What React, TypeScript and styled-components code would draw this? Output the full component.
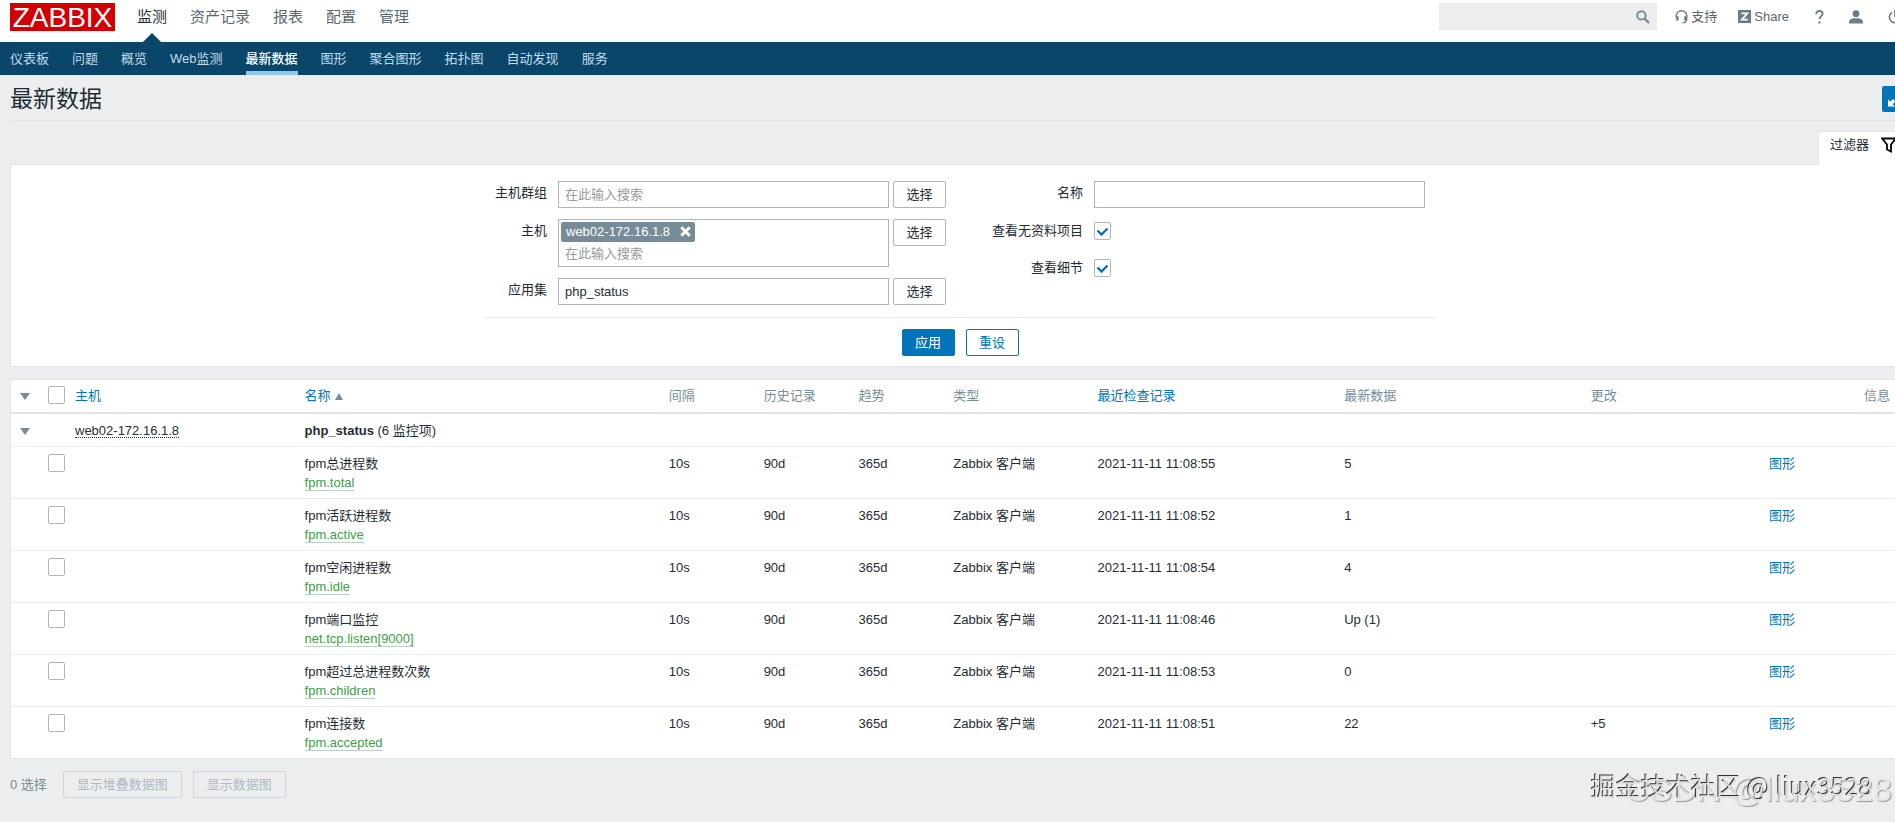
import React from 'react';
import styled, { createGlobalStyle, css } from 'styled-components';

const GlobalStyle = createGlobalStyle`
  * { box-sizing: border-box; }
  html { background: #ebedef; }
  body {
    margin: 0;
    overflow-x: hidden;
    color: #1f2c33;
    font: 13px/19px "Liberation Sans", "Noto Sans CJK SC", sans-serif;
  }
  button, input { font: inherit; color: inherit; }
  a { text-decoration: none; }
`;

const Page = styled.div`
  width: calc(100% + 25px);
`;

const TopBar = styled.header`
  display: flex;
  align-items: flex-start;
  height: 42px;
  padding: 3px 18px 0 10px;
  background: #fff;
`;

const Logo = styled.a`
  width: 105px;
  height: 28px;
  background: #d40000;
  color: #fff;
  font-size: 28px;
  line-height: 29px;
  text-align: center;
`;

const MainNav = styled.nav`
  display: flex;
  gap: 23px;
  margin-left: 22px;
`;

const MainLink = styled.a<{ $active?: boolean }>`
  position: relative;
  height: 39px;
  font-size: 15px;
  line-height: 28px;
  color: ${p => (p.$active ? '#1f2c33' : '#5b666c')};
  ${p => p.$active && css`
    &::after {
      content: '';
      position: absolute;
      bottom: 0;
      left: 50%;
      margin-left: -9px;
      border: 9px solid transparent;
      border-top: 0;
      border-bottom-color: #0a466a;
    }
  `}
`;

const Tools = styled.div`
  display: flex;
  align-items: center;
  margin-left: auto;
  height: 27px;
  color: #5b666c;
`;

const SearchBox = styled.form`
  display: flex;
  align-items: center;
  width: 218px;
  height: 27px;
  margin-right: 18px;
  padding-right: 7px;
  background: #ededed;
`;

const SearchInput = styled.input`
  flex: 1;
  min-width: 0;
  height: 100%;
  padding: 0 6px;
  border: 0;
  background: transparent;
  outline: 0;
`;

const PlainButton = styled.button`
  display: flex;
  padding: 0;
  border: 0;
  background: none;
  color: #768d99;
  cursor: pointer;
`;

const ToolLink = styled.a`
  display: flex;
  align-items: center;
  gap: 3px;
  color: #5b666c;
  margin-right: 21px;
  svg { color: #6b7d86; }
`;

const IconLinks = styled.div`
  display: flex;
  gap: 25px;
  margin-left: 5px;
  a { display: flex; color: #6b7d86; }
`;

const SubNav = styled.nav`
  display: flex;
  gap: 23px;
  height: 33px;
  padding: 0 10px;
  background: #0a466a;
`;

const SubLink = styled.a<{ $active?: boolean }>`
  height: 33px;
  line-height: 33px;
  color: ${p => (p.$active ? '#fff' : '#c3dcea')};
  font-weight: ${p => (p.$active ? 500 : 400)};
  border-bottom: ${p => (p.$active ? '4px solid #8fc8ee' : '0')};
`;

const Content = styled.main`
  padding: 0 10px;
`;

const TitleBar = styled.div`
  display: flex;
  align-items: center;
  justify-content: space-between;
  height: 46px;
  padding-top: 3px;
  border-bottom: 1px solid #dfe4e7;
`;

const Title = styled.h1`
  margin: 0;
  font-size: 23px;
  line-height: 34px;
  font-weight: 400;
`;

const FullScreen = styled.button`
  display: flex;
  width: 28px;
  height: 26px;
  padding: 0;
  align-items: center;
  justify-content: center;
  border: 0;
  border-radius: 2px;
  background: #0275b8;
  color: #fff;
`;

const TabRow = styled.div`
  display: flex;
  justify-content: flex-end;
  padding-top: 10px;
`;

const FilterTab = styled.button`
  display: flex;
  align-items: center;
  gap: 12px;
  height: 34px;
  padding: 0 12px 8px 11px;
  margin-bottom: -1px;
  border: 1px solid #dfe4e7;
  border-bottom: 0;
  background: #fff;
`;

const Panel = styled.section`
  border: 1px solid #dfe4e7;
  background: #fff;
`;

const FilterForm = styled.form`
  width: 952px;
  max-width: 100%;
  margin: 0 auto;
  padding: 16px 0 10px;
`;

const FilterGrid = styled.div`
  display: grid;
  grid-template-columns: 1fr 1fr;
  padding-bottom: 12px;
  border-bottom: 1px solid #ebeef0;
`;

const FieldColumn = styled.div<{ $label: number }>`
  display: grid;
  grid-template-columns: ${p => p.$label}px 1fr;
  grid-auto-rows: max-content;
  gap: 11px;
`;

const Label = styled.label`
  padding-top: 2px;
  text-align: right;
  white-space: nowrap;
`;

const FieldRow = styled.div`
  display: flex;
  align-items: flex-start;
  gap: 4px;
  min-height: 26px;
`;

const inputBox = css`
  width: 331px;
  border: 1px solid #acb6bb;
  background: #fff;
`;

const TextInput = styled.input`
  ${inputBox}
  height: 27px;
  padding: 0 6px;
  outline: 0;
  &::placeholder { color: #999; opacity: 1; }
`;

const MultiSelect = styled.div`
  ${inputBox}
  height: 48px;
  padding: 2px;
`;

const MultiInput = styled.input`
  display: block;
  width: 100%;
  height: 23px;
  padding: 0 4px;
  border: 0;
  outline: 0;
  background: transparent;
  &::placeholder { color: #999; opacity: 1; }
`;

const Tag = styled.span`
  display: inline-flex;
  align-items: center;
  gap: 10px;
  height: 20px;
  padding: 0 4px 1px 5px;
  border-radius: 2px;
  background: #768d99;
  color: #fff;
  vertical-align: top;
  button { color: #fff; }
`;

const Button = styled.button<{ $kind?: 'primary' | 'outline' | 'plain' }>`
  height: 27px;
  min-width: 53px;
  padding: 0 12px;
  line-height: 25px;
  border-radius: 2px;
  border: 1px solid ${p => (p.$kind === 'plain' ? '#acb6bb' : '#0275b8')};
  background: ${p => (p.$kind === 'primary' ? '#0275b8' : '#fff')};
  color: ${p => (p.$kind === 'primary' ? '#fff' : p.$kind === 'plain' ? '#1f2c33' : '#0275b8')};
  cursor: pointer;
  white-space: nowrap;
  &:disabled {
    padding: 0 13px;
    border-color: #ccd5d9;
    background: transparent;
    color: #acbbc2;
    cursor: default;
  }
`;

const FormActions = styled.div`
  display: flex;
  justify-content: center;
  gap: 11px;
  padding-top: 11px;
`;

const tick = `url("data:image/svg+xml,%3Csvg xmlns='http://www.w3.org/2000/svg' width='15' height='16' viewBox='0 0 15 16'%3E%3Cpath d='M2.5 7.5l4 4 6-6' fill='none' stroke='%230275b8' stroke-width='2.4'/%3E%3C/svg%3E")`;

const CheckBox = styled.input.attrs({ type: 'checkbox' })`
  appearance: none;
  display: block;
  flex: none;
  width: 17px;
  height: 18px;
  margin: 0;
  border: 1px solid #acb6bb;
  border-radius: 2px;
  background: #fff;
  &:checked { background: #fff ${tick} center no-repeat; }
`;

const CheckRow = styled(FieldRow)`
  padding-top: 3px;
`;

const DataTable = styled.table`
  width: 100%;
  table-layout: fixed;
  border-collapse: collapse;
  text-align: left;
  th, td { vertical-align: top; white-space: nowrap; }
  th {
    padding: 6px 5px 7px;
    border-bottom: 2px solid #dfe4e7;
    font-weight: 400;
    color: #768d99;
  }
  td { padding: 7px 5px 6px; border-bottom: 1px solid #ebeef0; }
  th:first-child, td:first-child { padding-left: 9px; }
  th:last-child { padding-right: 20px; text-align: right; }
`;

const ItemRow = styled.tr`
  td { padding-bottom: 7px; }
  &:last-child td { border-bottom: 0; }
`;

const Toggle = styled.button`
  display: block;
  width: 10px;
  height: 16px;
  padding: 4px 0 0;
  border: 0;
  background: none;
  &::before {
    content: '';
    display: block;
    border: 5px solid transparent;
    border-top: 7px solid #768d99;
    border-bottom: 0;
  }
`;

const SortUp = styled.span`
  display: inline-block;
  margin-left: 4px;
  border: 4px solid transparent;
  border-top: 0;
  border-bottom: 7px solid #768d99;
`;

const Link = styled.a`
  color: #0275b8;
`;

const HostLink = styled.a`
  display: inline-block;
  height: 17px;
  color: #1f2c33;
  border-bottom: 1px dotted #1f2c33;
`;

const ItemKey = styled.a`
  display: block;
  width: max-content;
  height: 18px;
  color: #429e47;
  border-bottom: 1px solid #bccfc9;
`;

const Footer = styled.footer`
  display: flex;
  align-items: center;
  gap: 11px;
  padding: 12px 0 22px;
  color: #768d99;
`;

const Selected = styled.span`
  margin-right: 5px;
`;

const Watermark = styled.div<{ $faint?: boolean }>`
  position: fixed;
  pointer-events: none;
  white-space: nowrap;
  line-height: 32px;
  ${p => p.$faint ? css`
    right: 3px;
    bottom: 17px;
    font-size: 34px;
    color: rgba(235, 237, 238, 0.9);
    text-shadow: 1px 1px 1px rgba(120, 120, 120, 0.7);
  ` : css`
    right: 22px;
    bottom: 21px;
    font-family: "Noto Sans CJK SC", sans-serif;
    font-size: 25px;
    color: #dcdedf;
    text-shadow: -1px -1px 0 #333;
  `}
`;

const SearchIcon = () => (
  <svg width="14" height="14" viewBox="0 0 14 14" fill="none" stroke="currentColor">
    <circle cx="5.4" cy="5.4" r="4.2" strokeWidth="2" />
    <path d="M8.6 8.6l4.4 4.4" strokeWidth="2.4" />
  </svg>
);

const HeadsetIcon = () => (
  <svg width="13" height="14" viewBox="0 0 13 14" fill="none" stroke="currentColor">
    <path d="M1.2 8V5.8a5.2 5 0 0 1 10.6 0V8.5c0 2.6-1.3 4.2-4.3 4.4" strokeWidth="1.4" />
    <path d="M2.4 6.2v4.2M10.4 6.2v4.2" strokeWidth="2.4" />
  </svg>
);

const ShareIcon = () => (
  <svg width="13" height="13" viewBox="0 0 13 13">
    <rect width="13" height="13" fill="currentColor" />
    <path d="M3.4 3.4h6L3.8 9.7h6" fill="none" stroke="#fff" strokeWidth="1.7" />
  </svg>
);

const HelpIcon = () => (
  <svg width="9" height="14" viewBox="0 0 9 14" fill="none" stroke="currentColor" strokeWidth="1.9">
    <path d="M1.2 4.2C1.2 2.2 2.5 1 4.4 1s3.2 1.1 3.2 2.8c0 2.3-3.1 2.5-3.1 5.4" />
    <path d="M4.5 11.4v2.2" />
  </svg>
);

const UserIcon = () => (
  <svg width="14" height="14" viewBox="0 0 14 14" fill="currentColor">
    <circle cx="7" cy="3.7" r="3.4" />
    <path d="M0 13.6v-1.4C0 9.6 2.6 8.6 4.4 8.2h5.2c1.8.4 4.4 1.4 4.4 4v1.4z" />
  </svg>
);

const PowerIcon = () => (
  <svg width="14" height="14" viewBox="0 0 14 14" fill="none" stroke="currentColor" strokeWidth="1.6">
    <path d="M4 2.4a5.6 5.6 0 1 0 6 0M7 0v7" />
  </svg>
);

const ExpandIcon = () => (
  <svg width="18" height="18" viewBox="0 0 18 18" fill="currentColor">
    <path d="M1 9.500l2.200 2.200L6 9l2.500 2.500-2.800 2.800L8 16.500H1zM17 8.500l-2.200-2.200L12 9 9.500 6.500l2.800-2.800L10 1.500h7z" />
  </svg>
);

const FunnelIcon = () => (
  <svg width="16" height="16" viewBox="0 0 16 16" fill="none" stroke="#000" strokeWidth="1.8">
    <path d="M1.200 1.500h13.600L10 7.500v7l-4-2v-5z" />
  </svg>
);

const CloseIcon = () => (
  <svg width="11" height="11" viewBox="0 0 11 11" stroke="currentColor" strokeWidth="3">
    <path d="M1.300 1.300l8.400 8.400M9.700 1.300L1.300 9.700" />
  </svg>
);

const mainLinks = ['监测', '资产记录', '报表', '配置', '管理'];
const subLinks = ['仪表板', '问题', '概览', 'Web监测', '最新数据', '图形', '聚合图形', '拓扑图', '自动发现', '服务'];

const columns = ['32px', '27px', '12.1%', '19.2%', '5%', '5%', '5%', '7.6%', '13%', '13%', '9.4%', '5%', '50px'];

interface Item { name: string; key: string; time: string; value: string; change?: string }

const items: Item[] = [
  { name: 'fpm总进程数', key: 'fpm.total', time: '11:08:55', value: '5' },
  { name: 'fpm活跃进程数', key: 'fpm.active', time: '11:08:52', value: '1' },
  { name: 'fpm空闲进程数', key: 'fpm.idle', time: '11:08:54', value: '4' },
  { name: 'fpm端口监控', key: 'net.tcp.listen[9000]', time: '11:08:46', value: 'Up (1)' },
  { name: 'fpm超过总进程数次数', key: 'fpm.children', time: '11:08:53', value: '0' },
  { name: 'fpm连接数', key: 'fpm.accepted', time: '11:08:51', value: '22', change: '+5' },
];

const TableGap = styled.div`
  margin-top: 12px;
`;

export default function App() {
  return (
    <Page>
      <GlobalStyle />
      <TopBar>
        <Logo href="#">ZABBIX</Logo>
        <MainNav>
          {mainLinks.map((t, i) => <MainLink key={t} href="#" $active={i === 0}>{t}</MainLink>)}
        </MainNav>
        <Tools>
          <SearchBox>
            <SearchInput type="text" aria-label="搜索" />
            <PlainButton type="button" aria-label="搜索"><SearchIcon /></PlainButton>
          </SearchBox>
          <ToolLink href="#"><HeadsetIcon />支持</ToolLink>
          <ToolLink href="#"><ShareIcon />Share</ToolLink>
          <IconLinks>
            <a href="#" aria-label="帮助"><HelpIcon /></a>
            <a href="#" aria-label="用户"><UserIcon /></a>
            <a href="#" aria-label="退出"><PowerIcon /></a>
          </IconLinks>
        </Tools>
      </TopBar>
      <SubNav>
        {subLinks.map(t => <SubLink key={t} href="#" $active={t === '最新数据'}>{t}</SubLink>)}
      </SubNav>

      <Content>
        <TitleBar>
          <Title>最新数据</Title>
          <FullScreen type="button" aria-label="全屏"><ExpandIcon /></FullScreen>
        </TitleBar>
        <TabRow>
          <FilterTab type="button">过滤器 <FunnelIcon /></FilterTab>
        </TabRow>
        <Panel>
          <FilterForm>
            <FilterGrid>
              <FieldColumn $label={63}>
                <Label htmlFor="groups">主机群组</Label>
                <FieldRow>
                  <TextInput id="groups" placeholder="在此输入搜索" />
                  <Button type="button" $kind="plain">选择</Button>
                </FieldRow>
                <Label htmlFor="hosts">主机</Label>
                <FieldRow>
                  <MultiSelect>
                    <Tag>
                      web02-172.16.1.8
                      <PlainButton type="button" aria-label="移除"><CloseIcon /></PlainButton>
                    </Tag>
                    <MultiInput id="hosts" placeholder="在此输入搜索" />
                  </MultiSelect>
                  <Button type="button" $kind="plain">选择</Button>
                </FieldRow>
                <Label htmlFor="application">应用集</Label>
                <FieldRow>
                  <TextInput id="application" defaultValue="php_status" />
                  <Button type="button" $kind="plain">选择</Button>
                </FieldRow>
              </FieldColumn>
              <FieldColumn $label={123}>
                <Label htmlFor="name">名称</Label>
                <FieldRow><TextInput id="name" /></FieldRow>
                <Label htmlFor="nodata">查看无资料项目</Label>
                <CheckRow><CheckBox id="nodata" defaultChecked /></CheckRow>
                <Label htmlFor="details">查看细节</Label>
                <CheckRow><CheckBox id="details" defaultChecked /></CheckRow>
              </FieldColumn>
            </FilterGrid>
            <FormActions>
              <Button type="button" $kind="primary">应用</Button>
              <Button type="reset" $kind="outline">重设</Button>
            </FormActions>
          </FilterForm>
        </Panel>

        <TableGap>
          <Panel>
            <DataTable>
              <colgroup>{columns.map((w, i) => <col key={i} width={w} />)}</colgroup>
              <thead>
                <tr>
                  <th><Toggle type="button" aria-label="全部折叠" /></th>
                  <th><CheckBox aria-label="全选" /></th>
                  <th><Link href="#">主机</Link></th>
                  <th><Link href="#">名称<SortUp /></Link></th>
                  <th>间隔</th>
                  <th>历史记录</th>
                  <th>趋势</th>
                  <th>类型</th>
                  <th><Link href="#">最近检查记录</Link></th>
                  <th>最新数据</th>
                  <th>更改</th>
                  <th />
                  <th>信息</th>
                </tr>
              </thead>
              <tbody>
                <tr>
                  <td><Toggle type="button" aria-label="折叠" /></td>
                  <td />
                  <td><HostLink href="#">web02-172.16.1.8</HostLink></td>
                  <td colSpan={10}><b>php_status</b> (6 监控项)</td>
                </tr>
                {items.map(item => (
                  <ItemRow key={item.key}>
                    <td />
                    <td><CheckBox aria-label={item.name} /></td>
                    <td />
                    <td>{item.name}<ItemKey href="#">{item.key}</ItemKey></td>
                    <td>10s</td>
                    <td>90d</td>
                    <td>365d</td>
                    <td>Zabbix 客户端</td>
                    <td>2021-11-11 {item.time}</td>
                    <td>{item.value}</td>
                    <td>{item.change}</td>
                    <td><Link href="#">图形</Link></td>
                    <td />
                  </ItemRow>
                ))}
              </tbody>
            </DataTable>
          </Panel>
        </TableGap>

        <Footer>
          <Selected>0 选择</Selected>
          <Button type="button" disabled>显示堆叠数据图</Button>
          <Button type="button" disabled>显示数据图</Button>
        </Footer>
      </Content>
      <Watermark $faint>CSDN @liux3528</Watermark>
      <Watermark>掘金技术社区 @ liux3528</Watermark>
    </Page>
  );
}
